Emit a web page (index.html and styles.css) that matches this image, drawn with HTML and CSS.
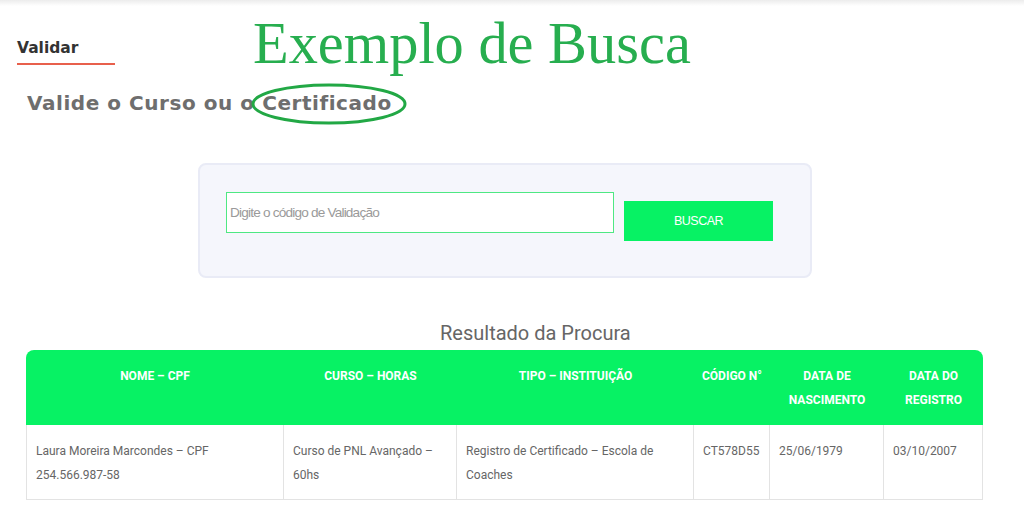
FILE: index.html
```html
<!DOCTYPE html>
<html lang="pt">
<head>
<meta charset="utf-8">
<title>Validar</title>
<link rel="stylesheet" href="styles.css">
</head>
<body>
<div class="topshade"></div>
<div class="head">
  <div class="tab">Validar</div>
  <div class="big-title">Exemplo de Busca</div>
</div>
<div class="subtitle">
  Valide o Curso ou o Certificado
  <svg class="ring" width="156" height="42" viewBox="0 0 156 42"><ellipse cx="78" cy="21" rx="76" ry="19" fill="none" stroke="#22a845" stroke-width="3"/></svg>
</div>
<div class="search-box">
  <input class="code-input" type="text" placeholder="Digite o código de Validação">
  <button class="search-btn">BUSCAR</button>
</div>
<div class="result-title">Resultado da Procura</div>
<table class="results">
  <thead>
    <tr>
      <th class="c1">NOME – CPF</th>
      <th class="c2">CURSO – HORAS</th>
      <th class="c3">TIPO – INSTITUIÇÃO</th>
      <th class="c4">CÓDIGO N°</th>
      <th class="c5">DATA DE NASCIMENTO</th>
      <th class="c6">DATA DO REGISTRO</th>
    </tr>
  </thead>
  <tbody>
    <tr>
      <td>Laura Moreira Marcondes – CPF 254.566.987-58</td>
      <td>Curso de PNL Avançado – 60hs</td>
      <td>Registro de Certificado – Escola de Coaches</td>
      <td>CT578D55</td>
      <td>25/06/1979</td>
      <td>03/10/2007</td>
    </tr>
  </tbody>
</table>
</body>
</html>
```
FILE: styles.css
```css
html, body {
  margin: 0;
  padding: 0;
  background: #ffffff;
}
body {
  width: 1024px;
  height: 531px;
  overflow: hidden;
  font-family: "DejaVu Sans", sans-serif;
}
.topshade {
  height: 6px;
  background: linear-gradient(#ececec, #ffffff);
}
.head {
  display: flex;
  align-items: flex-start;
  padding-left: 17px;
  height: 67px;
}
.tab {
  width: 98px;
  margin-top: 32px;
  font-family: "DejaVu Sans", sans-serif;
  font-weight: 700;
  font-size: 15.5px;
  line-height: 20px;
  color: #333333;
  padding-bottom: 5px;
  border-bottom: 2px solid #e8604c;
}
.big-title {
  margin-left: 138px;
  margin-top: 9px;
  font-family: "Liberation Serif", "Times New Roman", serif;
  font-size: 58.4px;
  line-height: 58px;
  color: #27ae4f;
  white-space: nowrap;
}
.subtitle {
  position: relative;
  margin: 18px 0 0 27px;
  font-family: "DejaVu Sans", sans-serif;
  font-weight: 700;
  font-size: 20px;
  letter-spacing: 0.55px;
  line-height: 24px;
  color: #6e6e6e;
  width: max-content;
}
.ring {
  position: absolute;
  left: 224px;
  top: -8px;
}
.search-box {
  margin: 48px 0 0 198px;
  width: 556px;
  padding: 27px 28px 35px 26px;
  background: #f5f6fc;
  border: 2px solid #e9ebf6;
  border-radius: 8px;
  display: flex;
  align-items: flex-start;
}
.code-input {
  box-sizing: border-box;
  width: 388px;
  height: 41px;
  margin: 0;
  padding: 0 3px;
  border: 1px solid #4ee883;
  background: #ffffff;
  font-family: "Liberation Sans", Arial, sans-serif;
  font-size: 13.6px;
  letter-spacing: -0.8px;
  color: #555;
  outline: none;
}
.code-input::placeholder {
  color: #9a9a9a;
}
.search-btn {
  margin: 9px 0 0 10px;
  width: 149px;
  height: 40px;
  border: none;
  background: #07f264;
  color: #ffffff;
  font-family: "Liberation Sans", Arial, sans-serif;
  font-size: 12.5px;
  letter-spacing: -0.5px;
  padding: 0;
}
.result-title {
  margin: 43px 0 0 440px;
  font-family: Roboto, sans-serif;
  font-size: 20px;
  line-height: 24px;
  color: #666666;
}
.results {
  margin: 5px 0 0 26px;
  width: 957px;
  border-collapse: separate;
  border-spacing: 0;
  table-layout: fixed;
  font-family: Roboto, sans-serif;
  font-size: 12px;
  line-height: 24px;
}
.results th,
.results td {
  box-sizing: border-box;
  vertical-align: top;
}
.results th {
  background: #07f264;
  color: #ffffff;
  font-weight: 700;
  text-align: center;
  padding: 14px 8px 13px;
  height: 75px;
}
.results th.c1 { width: 258px; border-top-left-radius: 8px; }
.results th.c2 { width: 173px; }
.results th.c3 { width: 237px; }
.results th.c4 { width: 76px; padding-left: 2px; padding-right: 2px; }
.results th.c5 { width: 114px; }
.results th.c6 { width: 99px; border-top-right-radius: 8px; }
.results td {
  color: #666666;
  padding: 14px 8px 11px 9px;
  height: 75px;
  border-right: 1px solid #e3e3e3;
  border-bottom: 1px solid #e3e3e3;
}
.results td:first-child {
  border-left: 1px solid #e3e3e3;
}
```
